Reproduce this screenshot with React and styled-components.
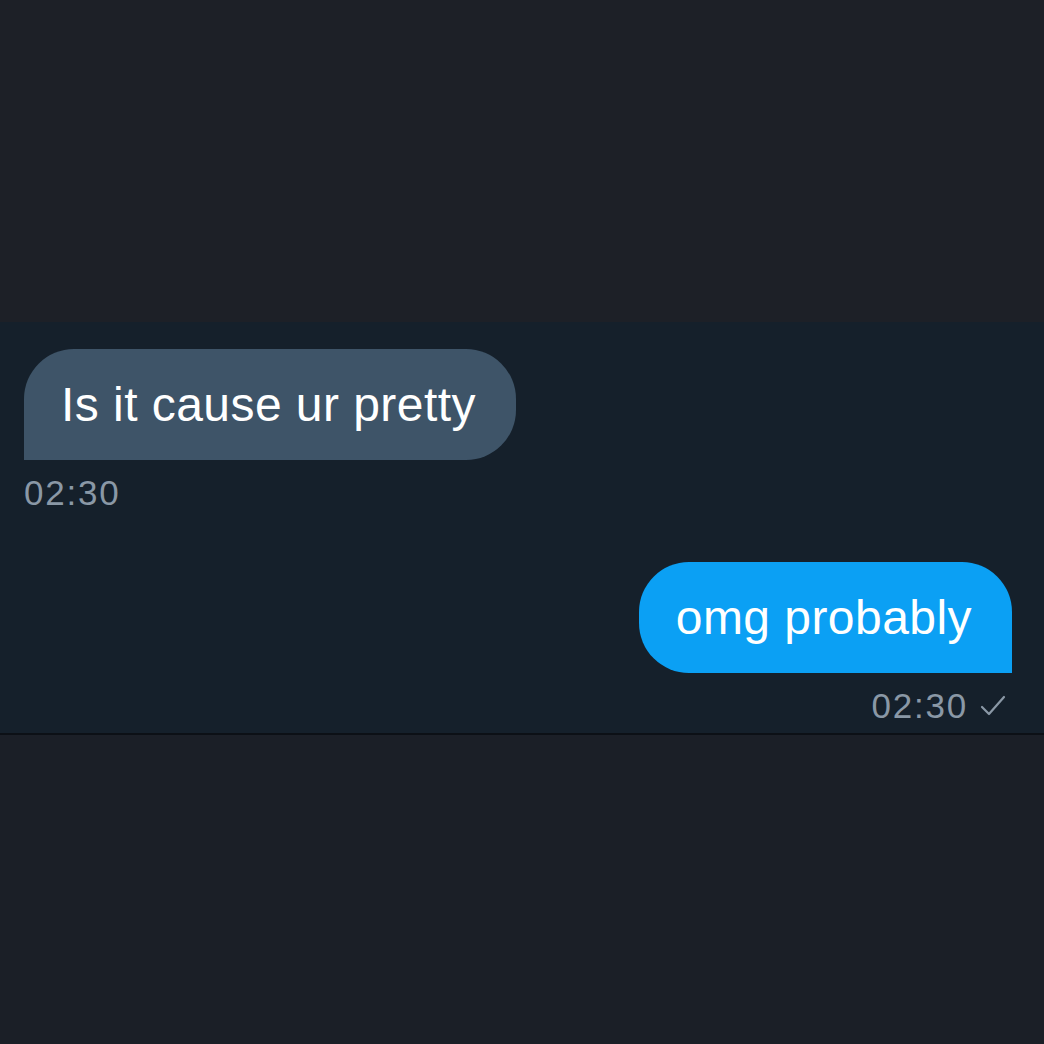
import React from "react";
import styled, { createGlobalStyle } from "styled-components";

const GlobalStyle = createGlobalStyle`
  html, body {
    margin: 0;
    padding: 0;
    background: #1c1f26;
  }
  body {
    font-family: "Liberation Sans", Arial, sans-serif;
  }
`;

const Page = styled.div`
  width: 1044px;
  height: 1044px;
  display: flex;
  flex-direction: column;
  overflow: hidden;
`;

const TopArea = styled.div`
  height: 322px;
  background: #1d2027;
`;

const ChatBand = styled.div`
  height: 411px;
  background: #15202b;
  display: flex;
  flex-direction: column;
  padding: 27px 32px 0 24px;
  box-sizing: border-box;
`;

const Divider = styled.div`
  height: 2px;
  background: #0c1016;
`;

const BottomArea = styled.div`
  flex: 1;
  background: #1b1f27;
`;

const Row = styled.div`
  display: flex;
  flex-direction: column;
  align-items: ${(p) => (p.$out ? "flex-end" : "flex-start")};
  margin-top: ${(p) => p.$gap || 0}px;
`;

const Bubble = styled.div`
  height: 111px;
  box-sizing: border-box;
  display: flex;
  align-items: center;
  padding: 0 40px 0 37px;
  font-size: 48px;
  letter-spacing: 0.45px;
  color: #ffffff;
  background: ${(p) => (p.$out ? "#0ba0f4" : "#3e5468")};
  border-radius: ${(p) => (p.$out ? "50px 50px 0 50px" : "50px 50px 50px 0")};
`;

const Meta = styled.div`
  display: flex;
  align-items: center;
  gap: 12px;
  margin-top: 14px;
  padding-right: ${(p) => (p.$out ? 6 : 0)}px;
  font-size: 35px;
  line-height: 38px;
  letter-spacing: 1.8px;
  color: #8a98a6;
`;

const Check = () => (
  <svg width="26" height="28" viewBox="0 0 26 28" fill="none">
    <path
      d="M2 15 L9 22 L24 5"
      stroke="#8a98a6"
      strokeWidth="2.2"
      strokeLinecap="round"
      strokeLinejoin="round"
    />
  </svg>
);

export default function App() {
  return (
    <Page>
      <GlobalStyle />
      <TopArea />
      <ChatBand>
        <Row>
          <Bubble>Is it cause ur pretty</Bubble>
          <Meta>02:30</Meta>
        </Row>
        <Row $out $gap={50}>
          <Bubble $out>omg probably</Bubble>
          <Meta $out>
            02:30
            <Check />
          </Meta>
        </Row>
      </ChatBand>
      <Divider />
      <BottomArea />
    </Page>
  );
}
